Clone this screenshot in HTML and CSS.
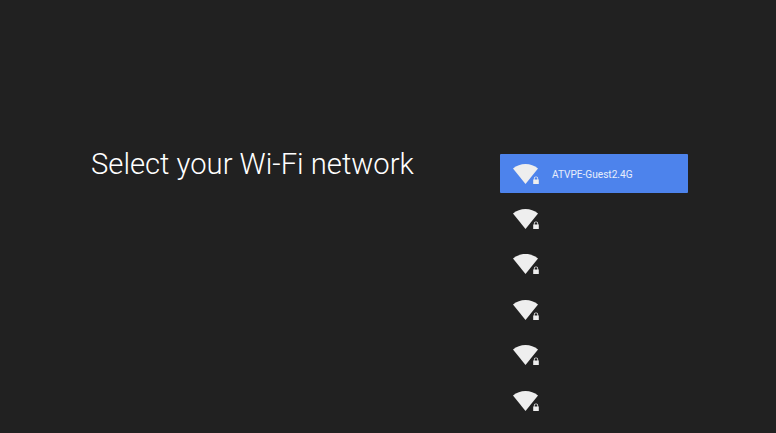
FILE: index.html
```html
<!DOCTYPE html>
<html lang="en">
<head>
    <meta charset="UTF-8">
    <meta name="viewport" content="width=device-width, initial-scale=1.0">
    <title>Select your Wi-Fi network</title>
    <link rel="stylesheet" href="styles.css">
</head>
<body>
    <svg class="defs" width="0" height="0">
        <symbol id="wifi-lock" viewBox="0 0 28 22">
            <path class="wave" d="M1 5.500C4.500 2.500 8.800 1 13.500 1s9 1.500 12.500 4.500L13.500 21z"/>
            <path class="lock" d="M21.200 16.500h.6v-.8a2.200 2.200 0 0 1 4.400 0v.8h.6V21h-5.600zm1.400 0h2.800v-.8a1.400 1.400 0 0 0-2.800 0z"/>
        </symbol>
    </svg>
    <main class="screen">
        <h1 class="title">Select your Wi-Fi network</h1>
        <ul class="networks">
            <li class="network selected">
                <svg class="icon"><use href="#wifi-lock"/></svg>
                <span class="name">ATVPE-Guest2.4G</span>
            </li>
            <li class="network"><svg class="icon"><use href="#wifi-lock"/></svg></li>
            <li class="network"><svg class="icon"><use href="#wifi-lock"/></svg></li>
            <li class="network"><svg class="icon"><use href="#wifi-lock"/></svg></li>
            <li class="network"><svg class="icon"><use href="#wifi-lock"/></svg></li>
            <li class="network"><svg class="icon"><use href="#wifi-lock"/></svg></li>
        </ul>
    </main>
</body>
</html>
```

FILE: styles.css
```css
html, body {
    margin: 0;
    height: 100%;
    overflow: hidden;
    background-color: #212121;
}
.defs {
    display: block;
}
.screen {
    display: flex;
    align-items: flex-start;
    height: 433px;
    box-sizing: border-box;
    padding: 154px 88px 0 91px;
    font-family: Roboto, "Liberation Sans", sans-serif;
}
.title {
    flex: 1;
    margin: -6px 0 0;
    font-size: 29.200px;
    font-weight: 300;
    line-height: 32px;
    color: #ffffff;
}
.networks {
    width: 188px;
    margin: 0;
    padding: 0;
    list-style: none;
}
.network {
    display: flex;
    align-items: center;
    height: 45.500px;
    padding-left: 12px;
    box-sizing: border-box;
}
.network.selected {
    height: 39px;
    margin-bottom: 3px;
    background-color: #4d83ec;
    border-radius: 1px;
}
.icon {
    width: 28px;
    height: 22px;
    fill: #eeeeee;
}
.name {
    margin: 1px 0 0 12px;
    font-size: 10.100px;
    color: #e8eefb;
}
```
